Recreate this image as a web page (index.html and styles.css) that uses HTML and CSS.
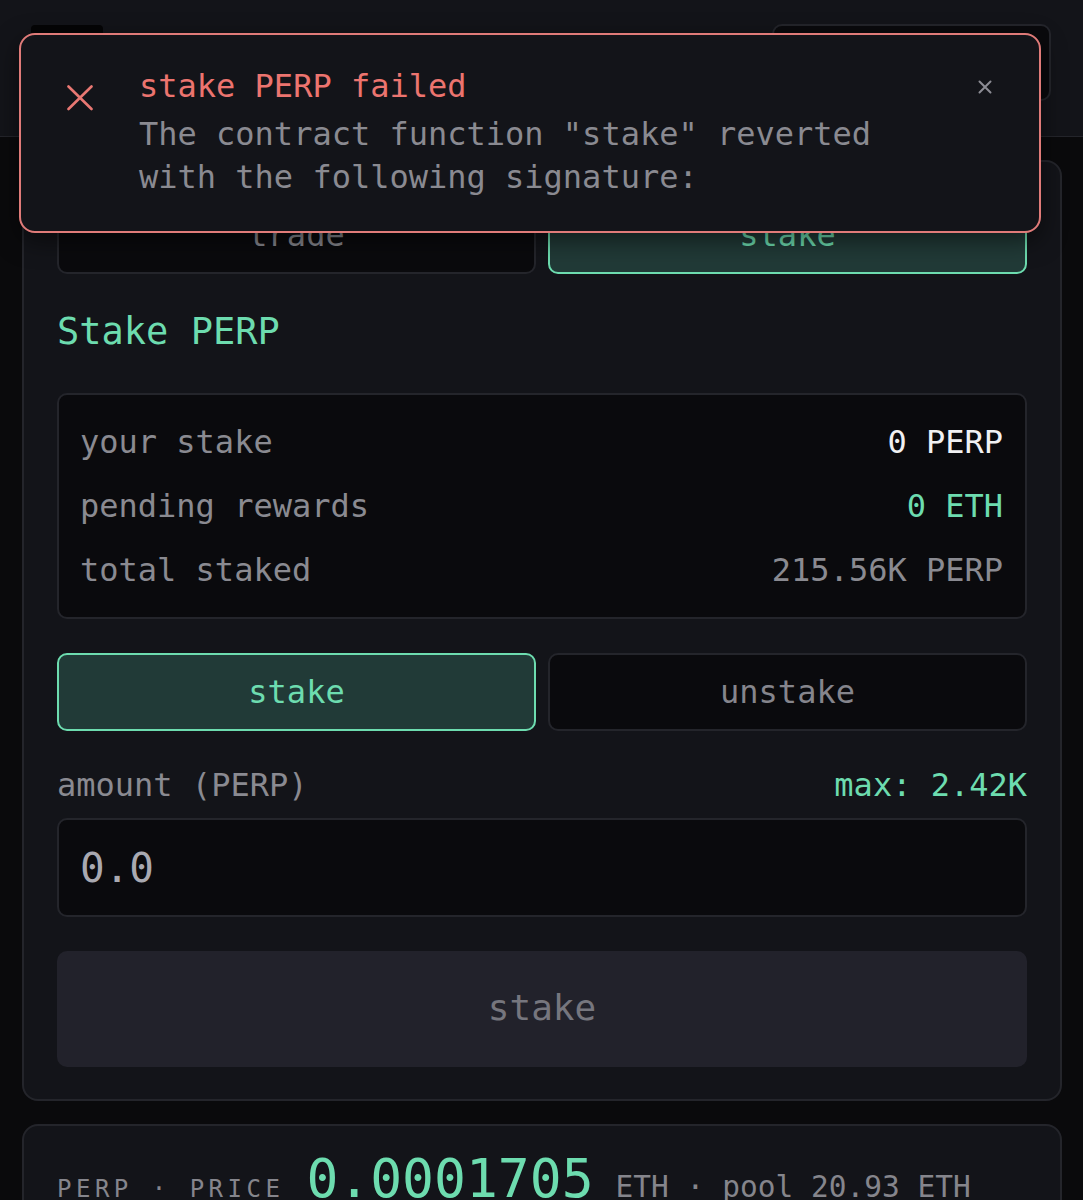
FILE: index.html
```html
<!DOCTYPE html>
<html lang="en">
<head>
<meta charset="utf-8">
<title>Stake PERP</title>
<link rel="stylesheet" href="styles.css">
</head>
<body>
<header class="topbar">
  <div class="logo"></div>
  <div class="wallet"></div>
</header>

<main class="page">
  <section class="card">
    <div class="seg">
      <button class="seg-btn">trade</button>
      <button class="seg-btn active">stake</button>
    </div>

    <h2 class="title">Stake PERP</h2>

    <div class="stats">
      <div class="row"><span class="lbl">your stake</span><span class="val white">0 PERP</span></div>
      <div class="row"><span class="lbl">pending rewards</span><span class="val mint">0 ETH</span></div>
      <div class="row"><span class="lbl">total staked</span><span class="val">215.56K PERP</span></div>
    </div>

    <div class="seg toggle">
      <button class="seg-btn active">stake</button>
      <button class="seg-btn">unstake</button>
    </div>

    <div class="amount-head">
      <span class="lbl">amount (PERP)</span>
      <span class="max">max: 2.42K</span>
    </div>
    <div class="input">0.0</div>

    <button class="submit">stake</button>
  </section>

  <section class="card info">
    <div class="price-line"><span class="cap">PERP · PRICE</span><span class="big">0.0001705</span><span class="unit">ETH · pool 20.93 ETH</span></div>
  </section>
</main>

<div class="toast">
  <svg class="toast-icon" width="26" height="26" viewBox="0 0 26 26" aria-hidden="true">
    <path d="M1.5 1.5 L24.5 24 M24.5 1.5 L1.5 24" stroke="#e97873" stroke-width="2.6" stroke-linecap="round" fill="none"/>
  </svg>
  <div class="toast-body">
    <div class="toast-title">stake PERP failed</div>
    <div class="toast-text">The contract function "stake" reverted with the following signature:</div>
  </div>
  <svg class="toast-close" width="14" height="14" viewBox="0 0 14 14" aria-hidden="true">
    <path d="M1.5 1.5 L12.5 12.5 M12.5 1.5 L1.5 12.5" stroke="#8c8c94" stroke-width="2" stroke-linecap="round" fill="none"/>
  </svg>
</div>
</body>
</html>
```

FILE: styles.css
```css
* { box-sizing: border-box; }

html, body {
  margin: 0;
  padding: 0;
  background: #0a0a0c;
  font-family: "DejaVu Sans Mono", "Liberation Mono", monospace;
  color: #8a8a91;
}

body { width: 1083px; height: 1200px; overflow: hidden; }

.topbar {
  height: 137px;
  background: #131419;
  border-bottom: 1px solid #24252b;
  display: flex;
  justify-content: space-between;
  align-items: flex-start;
  padding: 25px 32px 0 31px;
}

.logo {
  width: 72px;
  height: 72px;
  background: #050506;
  border-radius: 4px;
}

.wallet {
  width: 279px;
  height: 77px;
  margin-top: -1px;
  background: #0a0a0d;
  border: 2px solid #24252b;
  border-radius: 10px;
}

.page {
  padding: 23px 21px 0 22px;
  display: flex;
  flex-direction: column;
  gap: 23px;
}

.card {
  width: 1040px;
  background: #131419;
  border: 2px solid #24252b;
  border-radius: 16px;
  padding: 34px 33px 32px 33px;
}

.seg {
  display: flex;
  gap: 12px;
}

.seg-btn {
  flex: 1;
  height: 78px;
  background: #0a0a0d;
  border: 2px solid #24252b;
  border-radius: 10px;
  font-family: inherit;
  font-size: 32px;
  color: #85858c;
  padding: 0;
}

.seg-btn.active {
  background: #213a37;
  border-color: #6ddcaf;
  color: #6ddcaf;
}

.title {
  margin: 31px 0 34px;
  font-size: 37px;
  line-height: 54px;
  font-weight: normal;
  color: #6ddcaf;
}

.stats {
  background: #0a0a0d;
  border: 2px solid #24252b;
  border-radius: 10px;
  padding: 20px 22px 20px 21px;
  display: flex;
  flex-direction: column;
  gap: 10px;
}

.row {
  display: flex;
  justify-content: space-between;
  font-size: 32px;
  line-height: 54px;
}

.lbl { color: #8a8a91; }
.val { color: #8a8a91; }
.val.white { color: #f1f1f3; }
.val.mint { color: #6ddcaf; }

.toggle { margin-top: 34px; }

.amount-head {
  margin-top: 34px;
  display: flex;
  justify-content: space-between;
  font-size: 32px;
  line-height: 40px;
}

.max { color: #6ddcaf; }

.input {
  margin-top: 13px;
  height: 99px;
  background: #0a0a0d;
  border: 2px solid #24252b;
  border-radius: 10px;
  padding: 0 21px;
  display: flex;
  align-items: center;
  font-size: 41px;
  color: #a9a9b1;
}

.submit {
  display: block;
  width: 100%;
  margin-top: 34px;
  height: 116px;
  background: #22222b;
  border: none;
  border-radius: 10px;
  font-family: inherit;
  font-size: 36px;
  color: #76767e;
  padding: 0 0 4px;
}

.card.info {
  padding: 21px 33px 20px;
}

.price-line {
  display: flex;
  align-items: baseline;
  gap: 22px;
  line-height: 1.2;
  white-space: nowrap;
}

.cap {
  font-size: 24px;
  letter-spacing: 4.5px;
  color: #85858c;
}

.big {
  font-size: 53px;
  color: #6ddcaf;
}

.unit {
  font-size: 29.5px;
  color: #85858c;
}

.toast {
  position: absolute;
  left: 19px;
  top: 33px;
  width: 1022px;
  height: 200px;
  background: #131419;
  border: 2px solid #e07b79;
  border-radius: 16px;
  padding: 30px 47px 0 46px;
  display: flex;
  align-items: flex-start;
  gap: 46px;
  box-shadow: 0 8px 24px rgba(0, 0, 0, 0.5);
}

.toast-icon {
  flex: none;
  margin-top: 20px;
}

.toast-body {
  flex: 1;
  font-size: 32px;
  line-height: 43px;
}

.toast-title {
  color: #ec746f;
  margin-bottom: 5px;
}

.toast-text { color: #8a8a91; }

.toast-close {
  flex: none;
  margin-top: 15px;
}
```
